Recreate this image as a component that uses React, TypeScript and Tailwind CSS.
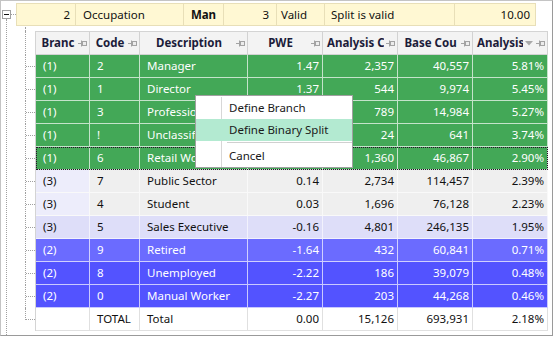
import React from 'react';

type Kind = 'green' | 'grey' | 'sales' | 'retired' | 'blue' | 'total';

interface Row {
  b: string;
  c: string;
  d: string;
  p: string;
  ac: string;
  bc: string;
  a: string;
  kind: Kind;
  focus?: boolean;
}

const rows: Row[] = [
  { b: '(1)', c: '2', d: 'Manager', p: '1.47', ac: '2,357', bc: '40,557', a: '5.81%', kind: 'green' },
  { b: '(1)', c: '1', d: 'Director', p: '1.37', ac: '544', bc: '9,974', a: '5.45%', kind: 'green' },
  { b: '(1)', c: '3', d: 'Professional', p: '', ac: '789', bc: '14,984', a: '5.27%', kind: 'green' },
  { b: '(1)', c: '!', d: 'Unclassified', p: '', ac: '24', bc: '641', a: '3.74%', kind: 'green' },
  { b: '(1)', c: '6', d: 'Retail Worker', p: '', ac: '1,360', bc: '46,867', a: '2.90%', kind: 'green', focus: true },
  { b: '(3)', c: '7', d: 'Public Sector', p: '0.14', ac: '2,734', bc: '114,457', a: '2.39%', kind: 'grey' },
  { b: '(3)', c: '4', d: 'Student', p: '0.03', ac: '1,696', bc: '76,128', a: '2.23%', kind: 'grey' },
  { b: '(3)', c: '5', d: 'Sales Executive', p: '-0.16', ac: '4,801', bc: '246,135', a: '1.95%', kind: 'sales' },
  { b: '(2)', c: '9', d: 'Retired', p: '-1.64', ac: '432', bc: '60,841', a: '0.71%', kind: 'retired' },
  { b: '(2)', c: '8', d: 'Unemployed', p: '-2.22', ac: '186', bc: '39,079', a: '0.48%', kind: 'blue' },
  { b: '(2)', c: '0', d: 'Manual Worker', p: '-2.27', ac: '203', bc: '44,268', a: '0.46%', kind: 'blue' },
  { b: '', c: 'TOTAL', d: 'Total', p: '0.00', ac: '15,126', bc: '693,931', a: '2.18%', kind: 'total' },
];

const kindStyle: Record<Kind, { bg: string; br: string; text: string; line: string }> = {
  green: { bg: 'bg-[#43a857]', br: 'bg-[#43a857]', text: 'text-white', line: 'border-[#c4e3ca]' },
  grey: { bg: 'bg-[#efefef]', br: 'bg-[#ededfb]', text: 'text-[#111111]', line: 'border-[#f9f9f9]' },
  sales: { bg: 'bg-[#dedef9]', br: 'bg-[#dedef9]', text: 'text-[#111111]', line: 'border-[#f2f2fd]' },
  retired: { bg: 'bg-[#6b6bff]', br: 'bg-[#6b6bff]', text: 'text-white', line: 'border-[#d0d0ff]' },
  blue: { bg: 'bg-[#5353ff]', br: 'bg-[#5353ff]', text: 'text-white', line: 'border-[#c9c9ff]' },
  total: { bg: 'bg-white', br: 'bg-white', text: 'text-[#111111]', line: 'border-[#e0e0e0]' },
};

function Pin() {
  return (
    <svg width="9" height="7" viewBox="0 0 9 7" className="shrink-0">
      <path d="M0 3.5H3M3.5 0.5V6.5" stroke="#a3a3a3" strokeWidth="1" fill="none" />
      <rect x="4.5" y="1.5" width="4" height="4" fill="#ececec" stroke="#a3a3a3" strokeWidth="1" />
    </svg>
  );
}

function SortArrow() {
  return (
    <svg width="8" height="5" viewBox="0 0 8 5" className="shrink-0">
      <path d="M0 0H8L4 4.5Z" fill="#a8a8a8" />
    </svg>
  );
}

const headers: { t: string; w: string; sort?: boolean }[] = [
  { t: 'Branc', w: 'w-[54px]' },
  { t: 'Code', w: 'w-[50px]' },
  { t: 'Description', w: 'w-[108px]' },
  { t: 'PWE', w: 'w-[75px]' },
  { t: 'Analysis C', w: 'w-[75px]' },
  { t: 'Base Cou', w: 'w-[75px]' },
  { t: 'Analysis', w: 'w-[75px]', sort: true },
];

function Connector({ last }: { last?: boolean }) {
  if (last) {
    return (
      <div className="flex w-[19px] shrink-0">
        <div className="w-[9px]" />
        <div className="h-[12px] w-[10px] border-b border-l border-dotted border-[#a0a0a0]" />
      </div>
    );
  }
  return (
    <div className="flex w-[19px] shrink-0">
      <div className="w-[9px]" />
      <div className="h-full w-[10px] border-l border-dotted border-[#a0a0a0]">
        <div className="h-[12px] w-full border-b border-dotted border-[#a0a0a0]" />
      </div>
    </div>
  );
}

function Cell({
  w,
  bg,
  line,
  right,
  children,
}: {
  w: string;
  bg: string;
  line: string;
  right?: boolean;
  children: React.ReactNode;
}) {
  return (
    <div
      className={`${w} ${bg} ${line} flex h-full shrink-0 items-center overflow-hidden whitespace-nowrap border-b border-r ${
        right ? 'justify-end pr-[3px]' : 'pl-[7px]'
      }`}
    >
      {children}
    </div>
  );
}

function DataRow({ r, last }: { r: Row; last: boolean }) {
  const s = kindStyle[r.kind];
  return (
    <div className="flex h-[23px]">
      <Connector last={last} />
      <div className={`relative flex h-[23px] border-l border-[#d4d4d4] ${s.text}`}>
        <Cell w="w-[54px]" bg={s.br} line={s.line}>{r.b}</Cell>
        <Cell w="w-[50px]" bg={s.bg} line={s.line}>{r.c}</Cell>
        <Cell w="w-[108px]" bg={s.bg} line={s.line}>{r.d}</Cell>
        <Cell w="w-[75px]" bg={s.bg} line={s.line} right>{r.p}</Cell>
        <Cell w="w-[75px]" bg={s.bg} line={s.line} right>{r.ac}</Cell>
        <Cell w="w-[75px]" bg={s.bg} line={s.line} right>{r.bc}</Cell>
        <Cell w="w-[75px]" bg={s.bg} line={s.line} right>{r.a}</Cell>
        {r.focus && (
          <div className="pointer-events-none absolute inset-0 border border-dotted border-[#2a0a2a]" />
        )}
      </div>
    </div>
  );
}

export default function App() {
  return (
    <div className="relative h-[337px] w-[554px] overflow-hidden bg-white font-['Noto_Sans','Open_Sans',sans-serif] text-[11.5px] leading-[16px] text-[#111111]">
      <div className="flex h-[336px] w-[553px] border border-b-[#9a9a9a] border-l-[#c4c4c4] border-r-[#9a9a9a] border-t-[#c4c4c4]">
        {/* outer tree gutter */}
        <div className="flex w-[15px] shrink-0 flex-col pt-[9px]">
          <div className="flex h-[9px] items-center">
            <div className="ml-[1px] flex h-[9px] w-[9px] items-center justify-center border border-[#a0a0a0] bg-white">
              <div className="h-[1px] w-[5px] bg-[#111111]" />
            </div>
            <div className="h-0 w-[5px] border-t border-dotted border-[#a0a0a0]" />
          </div>
          <div className="ml-[5px] flex-1 border-l border-dotted border-[#a0a0a0]" />
        </div>

        {/* content */}
        <div className="flex flex-1 flex-col">
          {/* parent yellow row */}
          <div className="mt-[2px] flex h-[23px] w-[520px] border border-[#e8dfb8] bg-[#fff8d3] text-[#111111]">
            <div className="flex w-[59px] shrink-0 items-center justify-end border-r border-[#e8dfb8] pr-[5px]">2</div>
            <div className="flex w-[108px] shrink-0 items-center border-r border-[#e8dfb8] pl-[7px]">Occupation</div>
            <div className="flex w-[40px] shrink-0 items-center justify-center border-r border-[#e8dfb8] font-bold">Man</div>
            <div className="flex w-[53px] shrink-0 items-center justify-end border-r border-[#e8dfb8] pr-[7px]">3</div>
            <div className="flex w-[48px] shrink-0 items-center border-r border-[#e8dfb8] pl-[4px]">Valid</div>
            <div className="flex w-[130px] shrink-0 items-center border-r border-[#e8dfb8] pl-[6px]">Split is valid</div>
            <div className="flex w-[80px] shrink-0 items-center justify-end pr-[5px]">10.00</div>
          </div>

          {/* child grid */}
          <div className="flex flex-col">
            <div className="flex h-[5px]">
              <div className="w-[9px]" />
              <div className="mt-[1px] h-[4px] w-[10px] border-l border-dotted border-[#a0a0a0]" />
            </div>
            <div className="flex h-[24px]">
              <div className="flex w-[19px] shrink-0">
                <div className="w-[9px]" />
                <div className="h-full w-[10px] border-l border-dotted border-[#a0a0a0]" />
              </div>
              <div className="flex h-[24px] border-l border-t border-[#d4d4d4] text-[#1c1c3a]">
                {headers.map((h) => (
                  <div
                    key={h.t}
                    className={`${h.w} flex h-full shrink-0 items-center border-b border-r border-[#d2d2d2] bg-[#f3f3f3]`}
                  >
                    <div className="min-w-0 flex-1 overflow-hidden whitespace-nowrap pl-[4px] text-center font-bold">
                      {h.t}
                    </div>
                    <div className="flex shrink-0 items-center gap-[3px] pl-[2px] pr-[2px]">
                      {h.sort && <SortArrow />}
                      <Pin />
                    </div>
                  </div>
                ))}
              </div>
            </div>
            {rows.map((r, i) => (
              <DataRow key={r.d} r={r} last={i === rows.length - 1} />
            ))}
          </div>
        </div>
      </div>

      {/* context menu */}
      <div className="absolute left-[195px] top-[95px] flex h-[73px] w-[158px] flex-col border border-[#a0a0a0] bg-white pt-[1px] text-[#1a1a1a]">
        <div className="flex h-[22px]">
          <div className="w-[26px] shrink-0 border-r border-[#d7d7d7]" />
          <div className="flex items-center pl-[7px]">Define Branch</div>
        </div>
        <div className="flex h-[22px] bg-[#b3ead1]">
          <div className="w-[26px] shrink-0" />
          <div className="flex items-center pl-[7px]">Define Binary Split</div>
        </div>
        <div className="flex h-[4px]">
          <div className="w-[26px] shrink-0 border-r border-[#d7d7d7]" />
          <div className="ml-[5px] mt-[1px] h-0 flex-1 border-t border-[#d0d0d0]" />
        </div>
        <div className="flex h-[22px]">
          <div className="w-[26px] shrink-0 border-r border-[#d7d7d7]" />
          <div className="flex items-center pl-[7px]">Cancel</div>
        </div>
      </div>
    </div>
  );
}
